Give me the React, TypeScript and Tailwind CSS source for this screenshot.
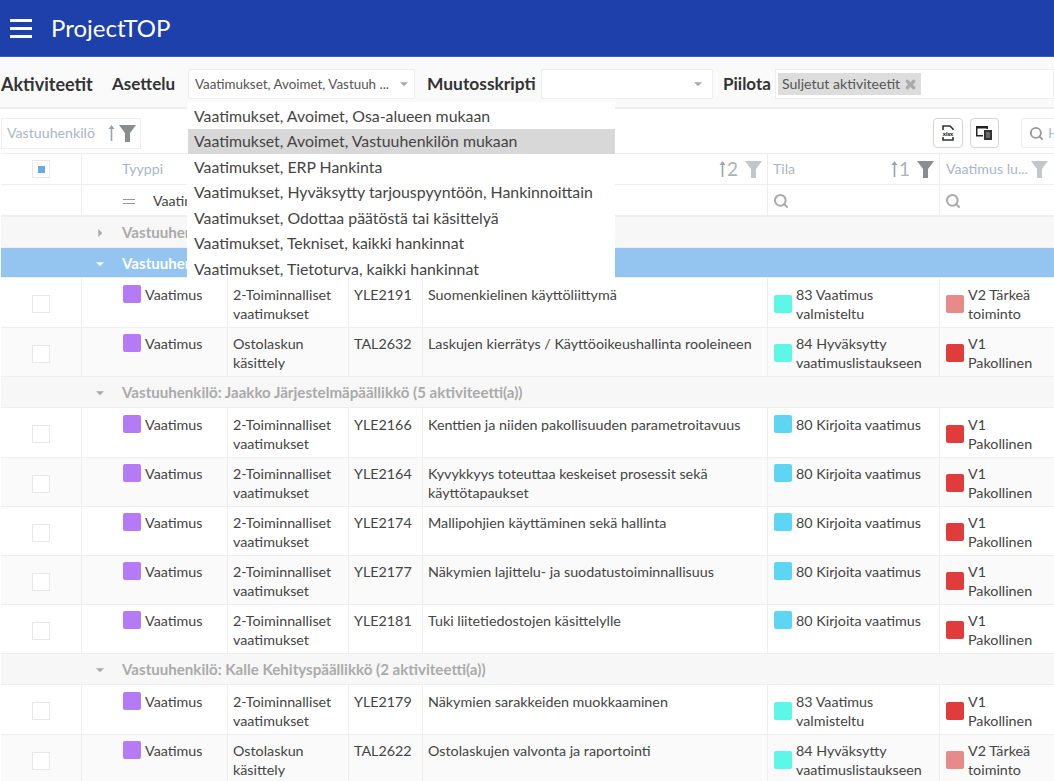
import { Search, X } from 'lucide-react'

type Row = {
  group?: string
  open?: boolean
  cat?: [string, string]
  code?: string
  title?: string
  titleLines?: string[]
  state?: [string, string?]
  stateColor?: string
  prio?: [string, string]
  prioColor?: string
  alt?: boolean
  h?: string
}

const TEAL = 'bg-[#5cf7e6]'
const BLUE = 'bg-[#5cd6f2]'
const RED = 'bg-[#e03c3c]'
const PINK = 'bg-[#e68a8a]'

const toiminnalliset: [string, string] = ['2-Toiminnalliset', 'vaatimukset']
const ostolasku: [string, string] = ['Ostolaskun', 'käsittely']
const pakollinen: [string, string] = ['V1', 'Pakollinen']
const tarkea: [string, string] = ['V2 Tärkeä', 'toiminto']

const kirjoita = { state: ['80 Kirjoita vaatimus'] as [string], stateColor: BLUE, prio: pakollinen, prioColor: RED }

const rows: Row[] = [
  { cat: toiminnalliset, code: 'YLE2191', title: 'Suomenkielinen käyttöliittymä', state: ['83 Vaatimus', 'valmisteltu'], stateColor: TEAL, prio: tarkea, prioColor: PINK, h: 'h-[50px]' },
  { cat: ostolasku, code: 'TAL2632', title: 'Laskujen kierrätys / Käyttöoikeushallinta rooleineen', state: ['84 Hyväksytty', 'vaatimuslistaukseen'], stateColor: TEAL, prio: pakollinen, prioColor: RED, alt: true },
  { group: 'Vastuuhenkilö: Jaakko Järjestelmäpäällikkö (5 aktiviteetti(a))', open: true },
  { cat: toiminnalliset, code: 'YLE2166', title: 'Kenttien ja niiden pakollisuuden parametroitavuus', ...kirjoita, h: 'h-[50px]' },
  { cat: toiminnalliset, code: 'YLE2164', titleLines: ['Kyvykkyys toteuttaa keskeiset prosessit sekä', 'käyttötapaukset'], ...kirjoita, alt: true },
  { cat: toiminnalliset, code: 'YLE2174', title: 'Mallipohjien käyttäminen sekä hallinta', ...kirjoita },
  { cat: toiminnalliset, code: 'YLE2177', title: 'Näkymien lajittelu- ja suodatustoiminnallisuus', ...kirjoita, alt: true },
  { cat: toiminnalliset, code: 'YLE2181', title: 'Tuki liitetiedostojen käsittelylle', ...kirjoita },
  { group: 'Vastuuhenkilö: Kalle Kehityspäällikkö (2 aktiviteetti(a))', open: true },
  { cat: toiminnalliset, code: 'YLE2179', title: 'Näkymien sarakkeiden muokkaaminen', state: ['83 Vaatimus', 'valmisteltu'], stateColor: TEAL, prio: pakollinen, prioColor: RED, h: 'h-[50px]' },
  { cat: ostolasku, code: 'TAL2622', title: 'Ostolaskujen valvonta ja raportointi', state: ['84 Hyväksytty', 'vaatimuslistaukseen'], stateColor: TEAL, prio: tarkea, prioColor: PINK, alt: true },
]

const options = [
  'Vaatimukset, Avoimet, Osa-alueen mukaan',
  'Vaatimukset, Avoimet, Vastuuhenkilön mukaan',
  'Vaatimukset, ERP Hankinta',
  'Vaatimukset, Hyväksytty tarjouspyyntöön, Hankinnoittain',
  'Vaatimukset, Odottaa päätöstä tai käsittelyä',
  'Vaatimukset, Tekniset, kaikki hankinnat',
  'Vaatimukset, Tietoturva, kaikki hankinnat',
]

function Funnel({ dark }: { dark?: boolean }) {
  return (
    <svg width="17" height="17" viewBox="0 0 17 17" className={dark ? 'fill-[#8a8d90]' : 'fill-[#c4c7c9]'}>
      <path d="M0 0h17l-6 8v9H6V8z" />
    </svg>
  )
}

function SortArrow() {
  return (
    <svg width="7" height="16" viewBox="0 0 7 16" className="fill-[#9aa4ad]">
      <path d="M3.500 0 6.500 4H4.300v12H2.700V4H.5z" />
    </svg>
  )
}

function Caret({ open, white }: { open?: boolean; white?: boolean }) {
  return (
    <svg width="8" height="8" viewBox="0 0 9 9" className={white ? 'fill-white' : 'fill-[#aaa]'}>
      {open ? <path d="M0 2.500h9L4.500 7z" /> : <path d="M2.500 0v9L7 4.500z" />}
    </svg>
  )
}

function GroupRow({ label, open, active }: { label: string; open?: boolean; active?: boolean }) {
  return (
    <div className={`flex items-center border-b border-[#eee] ${active ? 'h-[30px] bg-[#93c5f0] pt-[2px]' : 'h-[31px] bg-[#f7f7f7] pt-[1px]'}`}>
      <div className="flex w-[121px] shrink-0 justify-end pr-[18px]">
        <Caret open={open} white={active} />
      </div>
      <span className={`text-[15.1px] font-bold whitespace-nowrap ${active ? 'text-white' : 'text-[#aaa]'}`}>{label}</span>
    </div>
  )
}

function DataRow({ row }: { row: Row }) {
  const pad = row.h ? 'pt-[7px]' : 'pt-[6px]'
  const cell = `border-r border-[#eee] ${pad} pl-[5px] leading-[19px] text-[14.3px] text-[#444]`
  return (
    <div className={`flex border-b border-[#eee] ${row.h ?? 'h-[49px]'} ${row.alt ? 'bg-[#fafafa]' : 'bg-white'}`}>
      <div className="flex w-[81px] shrink-0 items-center justify-center border-r border-[#eee] pt-[3px]">
        <div className="h-[18px] w-[18px] border border-[#e8e8e8] bg-white" />
      </div>
      <div className={`${cell} flex w-[146px] shrink-0 gap-[4px] !pl-[41px]`}>
        <div className="h-[18px] w-[18px] rounded-[2px] bg-[#b57bf7]" />
        <span>Vaatimus</span>
      </div>
      <div className={`${cell} w-[121px] shrink-0`}>
        {row.cat?.[0]}
        <br />
        {row.cat?.[1]}
      </div>
      <div className={`${cell} w-[74px] shrink-0`}>{row.code}</div>
      <div className={`${cell} w-[345px] shrink-0`}>
        {row.titleLines ? row.titleLines.map((l) => <div key={l}>{l}</div>) : row.title}
      </div>
      <div className={`${cell} flex w-[172px] shrink-0 gap-[4px] !pl-[6px]`}>
        <div className={`h-[18px] w-[18px] rounded-[2px] ${row.state?.[1] ? 'mt-[10px]' : 'mt-0'} ${row.stateColor}`} />
        <div>
          <div>{row.state?.[0]}</div>
          <div>{row.state?.[1]}</div>
        </div>
      </div>
      <div className={`flex flex-1 gap-[4px] ${pad} pl-[6px] text-[14.3px] leading-[19px] text-[#444]`}>
        <div className={`mt-[10px] h-[18px] w-[18px] rounded-[2px] ${row.prioColor}`} />
        <div>
          <div>{row.prio?.[0]}</div>
          <div>{row.prio?.[1]}</div>
        </div>
      </div>
    </div>
  )
}

export default function App() {
  return (
    <div className="relative h-[781px] w-[1054px] overflow-hidden bg-white font-['Lato','Noto_Sans',sans-serif]">
      {/* Yläpalkki */}
      <header className="flex h-[57px] items-center border-b border-[#3a5cc4] bg-[#1e40ab] pl-[10px]">
        <div className="flex w-[22px] flex-col gap-[5px]">
          <div className="h-[3px] bg-white" />
          <div className="h-[3px] bg-white" />
          <div className="h-[3px] bg-white" />
        </div>
        <span className="ml-[19px] text-[24px] text-white">ProjectTOP</span>
      </header>

      {/* Työkalurivi */}
      <div className="flex h-[52px] items-center border-b-2 border-[#eee] bg-[#fafafa] pt-[4px]">
        <span className="ml-[1px] w-[111px] text-[18px] font-bold text-[#333]">Aktiviteetit</span>
        <span className="w-[76px] text-[17px] font-bold text-[#333]">Asettelu</span>
        <div className="flex h-[30px] w-[227px] items-center justify-between rounded-[2px] border border-[#eee] bg-white pr-[6px] pl-[6px]">
          <span className="text-[13.4px] whitespace-nowrap text-[#555]">Vaatimukset, Avoimet, Vastuuh ...</span>
          <Caret open />
        </div>
        <span className="ml-[12px] w-[114px] text-[17.4px] font-bold whitespace-nowrap text-[#333]">Muutosskripti</span>
        <div className="flex h-[30px] w-[172px] items-center justify-end rounded-[2px] border border-[#eee] bg-white pr-[10px]">
          <Caret open />
        </div>
        <span className="ml-[10px] w-[52px] text-[17px] font-bold text-[#333]">Piilota</span>
        <div className="flex h-[30px] flex-1 items-center border border-[#eee] bg-white pl-[2px]">
          <div className="flex h-[22px] items-center gap-[4px] bg-[#ddd] pr-[4px] pl-[4px] text-[14.1px] whitespace-nowrap text-[#555]">
            Suljetut aktiviteetit
            <X size={13} strokeWidth={6} className="text-[#aaa]" />
          </div>
        </div>
      </div>

      {/* Suodatus ja toiminnot */}
      <div className="flex h-[44px] items-center justify-between pt-[4px] pl-[1px]">
        <div className="flex h-[31px] w-[140px] items-center justify-between border border-[#eee] pr-[4px] pl-[5px]">
          <span className="text-[14.2px] text-[#a9b6c4]">Vastuuhenkilö</span>
          <div className="flex items-center gap-[4px]">
            <SortArrow />
            <Funnel dark />
          </div>
        </div>
        <div className="flex items-center">
          <button className="flex h-[30px] w-[30px] items-center justify-center rounded-[4px] border border-[#d5d5d5] bg-white">
            <svg width="18" height="18" viewBox="0 0 18 18">
              <path d="M4 6V2h7l3 3v1M4 13v3h10v-3" fill="none" stroke="#333" strokeWidth="1.6" />
              <text x="9" y="11.500" textAnchor="middle" fontSize="6" fontWeight="900" fill="#222" fontFamily="Lato, sans-serif">xlsx</text>
            </svg>
          </button>
          <button className="ml-[7px] flex h-[30px] w-[29px] items-center justify-center rounded-[4px] border border-[#d5d5d5] bg-white">
            <svg width="18" height="16" viewBox="0 0 18 16">
              <path d="M0 1h12v3h-1.500V3.500h-9V10H7v1.500H0z" fill="#222" />
              <rect x="8" y="5" width="8" height="10" fill="#333" />
              <path d="M10 8h4M10 10h4M10 12h4" stroke="#bbb" strokeWidth="0.8" />
            </svg>
          </button>
          <div className="ml-[22px] flex h-[30px] w-[33px] items-center overflow-hidden rounded-l-[3px] border border-r-0 border-[#eee] pl-[7px]">
            <Search size={15} strokeWidth={3} className="shrink-0 text-[#999]" />
            <span className="ml-[4px] text-[14.2px] text-[#9cc2e8]">H</span>
          </div>
        </div>
      </div>

      {/* Taulukko */}
      <div className="pl-[1px]">
        <div className="flex h-[32px] border-y border-[#eee]">
          <div className="flex w-[81px] shrink-0 items-center justify-center border-r border-[#eee]">
            <div className="flex h-[18px] w-[18px] items-center justify-center border border-[#e8e8e8]">
              <div className="h-[7px] w-[7px] bg-[#6fa8dc]" />
            </div>
          </div>
          <div className="flex w-[686px] shrink-0 items-center border-r border-[#eee] pr-[5px] pl-[40px]">
            <span className="flex-1 text-[14.2px] text-[#a9b6c4]">Tyyppi</span>
            <SortArrow />
            <span className="mr-[7px] ml-[1px] text-[19px] text-[#aab2ba]">2</span>
            <Funnel />
          </div>
          <div className="flex w-[172px] shrink-0 items-center border-r border-[#eee] pr-[5px] pl-[5px]">
            <span className="flex-1 text-[14.2px] text-[#a9b6c4]">Tila</span>
            <SortArrow />
            <span className="mr-[7px] ml-[1px] text-[19px] text-[#aab2ba]">1</span>
            <Funnel dark />
          </div>
          <div className="flex flex-1 items-center gap-[3px] pl-[6px]">
            <span className="text-[14.2px] whitespace-nowrap text-[#a9b6c4]">Vaatimus lu...</span>
            <Funnel />
          </div>
        </div>
        <div className="flex h-[32px] border-b-2 border-[#eee]">
          <div className="w-[81px] shrink-0 border-r border-[#eee]" />
          <div className="flex w-[686px] shrink-0 items-center border-r border-[#eee] pt-[2px] pl-[41px]">
            <div className="flex w-[12px] flex-col gap-[3px]">
              <div className="h-[1px] bg-[#999]" />
              <div className="h-[1px] bg-[#999]" />
            </div>
            <span className="ml-[18px] text-[14.2px] text-[#444]">Vaatimus</span>
          </div>
          <div className="flex w-[172px] shrink-0 items-center border-r border-[#eee] pt-[1px] pl-[5px]">
            <Search size={16} strokeWidth={3} className="text-[#aaa]" />
          </div>
          <div className="flex flex-1 items-center pt-[1px] pl-[5px]">
            <Search size={16} strokeWidth={3} className="text-[#aaa]" />
          </div>
        </div>
        <GroupRow label="Vastuuhenkilö:" />
        <GroupRow label="Vastuuhenkilö:" open active />
        {rows.map((row, i) =>
          row.group ? (
            <GroupRow key={i} label={row.group} open={row.open} />
          ) : (
            <DataRow key={i} row={row} />
          ),
        )}
      </div>

      {/* Asettelu-valikko auki */}
      <div className="absolute top-[102px] left-[187px] h-[176px] w-[428px] overflow-hidden bg-white pt-[1px] pl-[1px]">
        {options.map((o, i) => (
          <div
            key={o}
            className={`flex h-[25.5px] items-center pl-[6px] text-[15.85px] whitespace-nowrap text-[#444] ${i === 1 ? 'bg-[#d8d8d8]' : ''}`}
          >
            {o}
          </div>
        ))}
      </div>
    </div>
  )
}
